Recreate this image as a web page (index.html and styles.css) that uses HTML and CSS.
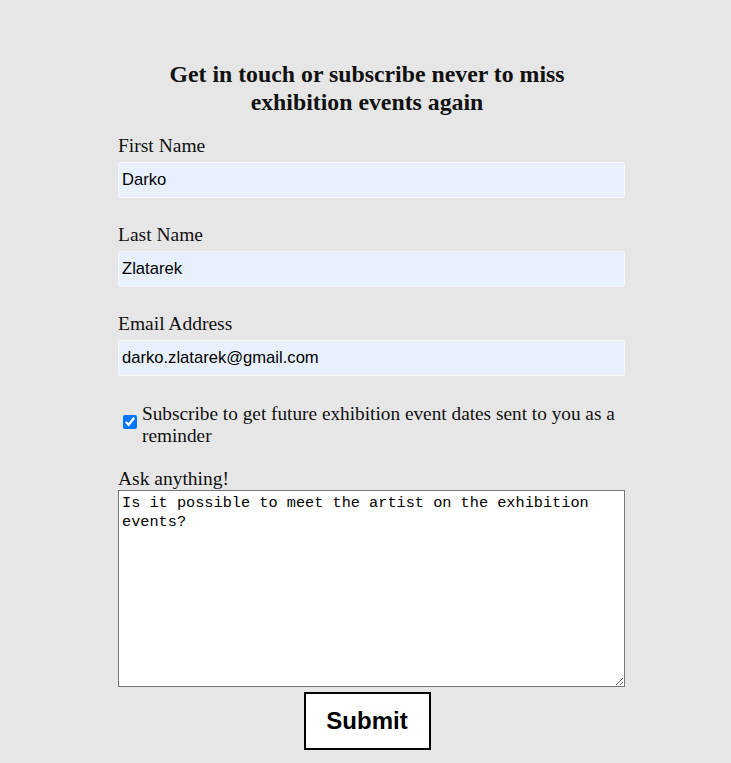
FILE: index.html
```html
<!DOCTYPE html>
<html>
<head>
<meta charset="utf-8">
<link rel="stylesheet" href="styles.css">
</head>
<body>
<form class="form">
  <h2 class="title">Get in touch or subscribe never to miss exhibition events again</h2>
  <label class="label" for="fn">First Name</label>
  <input class="field" id="fn" type="text" value="Darko">
  <label class="label" for="ln">Last Name</label>
  <input class="field" id="ln" type="text" value="Zlatarek">
  <label class="label" for="em">Email Address</label>
  <input class="field" id="em" type="email" value="darko.zlatarek@gmail.com">
  <div class="check-row">
    <input class="check" id="sub" type="checkbox" checked>
    <label class="check-label" for="sub">Subscribe to get future exhibition event dates sent to you as a reminder</label>
  </div>
  <label class="label ask" for="msg">Ask anything!</label>
  <textarea class="area" id="msg">Is it possible to meet the artist on the exhibition events?</textarea>
  <div class="actions">
    <button class="submit" type="button">Submit</button>
  </div>
</form>
</body>
</html>
```
FILE: styles.css
```css
html, body {
  margin: 0;
  padding: 0;
  background: #e6e6e6;
}
body {
  font-family: "Liberation Serif", "Times New Roman", serif;
  color: #111;
}
.form {
  width: 498px;
  margin-left: 118px;
  padding-top: 60px;
  display: flex;
  flex-direction: column;
}
.title {
  margin: 0 0 19px 0;
  font-size: 23.8px;
  line-height: 28px;
  font-weight: bold;
  text-align: center;
  padding: 0 30px;
}
.label {
  font-size: 19.5px;
  line-height: 22px;
  margin: 0 0 5px 0;
}
.field {
  box-sizing: border-box;
  width: 507px;
  height: 36px;
  margin: 0 0 26px 0;
  padding: 0 3px;
  background: #e8f0fe;
  border: 1px solid #f4f6fa;
  border-radius: 2px;
  font-family: "Liberation Sans", Arial, sans-serif;
  font-size: 16.6px;
  color: #000;
  outline: none;
}
.check-row {
  width: 507px;
  display: flex;
  align-items: flex-start;
  margin: 1px 0 0 0;
}
.check {
  width: 14px;
  height: 14px;
  margin: 12px 5px 0 5px;
  accent-color: #0075ff;
  flex: none;
}
.check-label {
  font-size: 19.3px;
  line-height: 22px;
}
.ask {
  margin-top: 21px;
  margin-bottom: 0;
}
.area {
  box-sizing: border-box;
  width: 507px;
  height: 197px;
  margin: 0;
  padding: 3px 3px;
  border: 1px solid #767676;
  background: #fff;
  font-family: "Liberation Mono", "Courier New", monospace;
  font-size: 15.25px;
  line-height: 19px;
  color: #000;
}
.actions {
  display: flex;
  justify-content: center;
  margin-top: 5px;
}
.submit {
  width: 127px;
  height: 58px;
  background: #fff;
  border: 2px solid #000;
  font-family: "Liberation Sans", Arial, sans-serif;
  font-weight: bold;
  font-size: 24px;
  color: #000;
  cursor: pointer;
}
```
